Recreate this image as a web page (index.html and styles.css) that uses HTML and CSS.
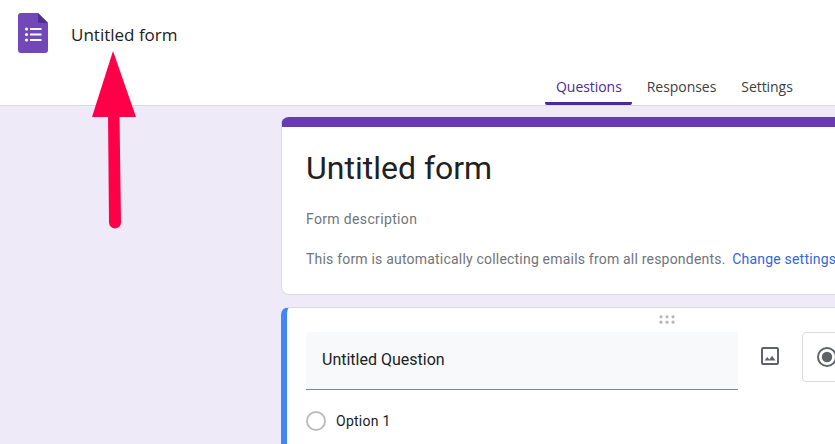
FILE: index.html
```html
<!DOCTYPE html>
<html lang="en">
<head>
<meta charset="utf-8">
<title>Untitled form</title>
<link rel="stylesheet" href="styles.css">
</head>
<body>
<div class="page">
  <header class="topbar">
    <div class="brand">
      <svg class="logo" width="30" height="40" viewBox="0 0 30 40">
        <path d="M3 0H20L30 10V37a3 3 0 0 1-3 3H3a3 3 0 0 1-3-3V3a3 3 0 0 1 3-3z" fill="#7248b9"/>
        <path d="M20 0L30 10H22a2 2 0 0 1-2-2z" fill="#4f2e91"/>
        <g fill="#fff">
          <circle cx="8.500" cy="16" r="1.600"/><circle cx="8.500" cy="21.500" r="1.600"/><circle cx="8.500" cy="27" r="1.600"/>
          <rect x="12" y="15" width="11.500" height="2"/><rect x="12" y="20.500" width="11.500" height="2"/><rect x="12" y="26" width="11.500" height="2"/>
        </g>
      </svg>
      <span class="doc-title">Untitled form</span>
    </div>
    <nav class="tabs">
      <a class="tab tab-active">Questions</a>
      <a class="tab">Responses</a>
      <a class="tab">Settings</a>
    </nav>
  </header>
  <main class="content">
    <section class="card title-card">
      <h1 class="form-title">Untitled form</h1>
      <p class="form-desc">Form description</p>
      <p class="form-note">This form is automatically collecting emails from all respondents. <a class="link">Change settings</a></p>
    </section>
    <section class="card question-card">
      <div class="drag">
        <svg width="16" height="9" viewBox="0 0 16 9" fill="#b5b7bb">
          <circle cx="2" cy="1.800" r="1.600"/><circle cx="8" cy="1.800" r="1.600"/><circle cx="14" cy="1.800" r="1.600"/>
          <circle cx="2" cy="7.200" r="1.600"/><circle cx="8" cy="7.200" r="1.600"/><circle cx="14" cy="7.200" r="1.600"/>
        </svg>
      </div>
      <div class="q-row">
        <div class="q-input">Untitled Question</div>
        <svg class="img-icon" width="24" height="24" viewBox="0 0 24 24" fill="#5f6368">
          <path d="M19 5v14H5V5h14m0-2H5a2 2 0 0 0-2 2v14a2 2 0 0 0 2 2h14a2 2 0 0 0 2-2V5a2 2 0 0 0-2-2z"/>
          <path d="M14.100 11.800l-2.800 3.600-2-2.400L6.500 16.600h11z"/>
        </svg>
        <div class="type-select">
          <svg width="24" height="24" viewBox="0 0 24 24" fill="#5f6368">
            <path d="M12 2a10 10 0 1 0 0 20 10 10 0 0 0 0-20zm0 18a8 8 0 1 1 0-16 8 8 0 0 1 0 16z"/>
            <circle cx="12" cy="12" r="5.200"/>
          </svg>
        </div>
      </div>
      <div class="option">
        <span class="radio"></span>
        <span class="option-label">Option 1</span>
      </div>
    </section>
  </main>
  <svg class="arrow" width="44" height="178" viewBox="0 0 44 178">
    <path d="M21 0L44 66H0z" fill="#ff0048"/>
    <path d="M16 65H27.500L29 171.500a6 6 0 0 1-12 0z" fill="#ff0048"/>
  </svg>
</div>
</body>
</html>
```
FILE: styles.css
```css
* { box-sizing: border-box; }
html, body { margin: 0; padding: 0; height: 100%; }
body { font-family: Roboto, "Liberation Sans", sans-serif; color: #202124; background: #eeeaf8; }
.page { position: relative; width: 835px; height: 444px; overflow: hidden; }
.topbar { height: 106px; background: #fff; border-bottom: 1px solid #dadce0; display: flex; flex-direction: column; justify-content: space-between; }
.brand { display: flex; align-items: center; padding: 13px 0 0 18px; }
.logo { flex: none; }
.doc-title { margin-left: 23px; font-family: "Open Sans", Roboto, sans-serif; font-size: 17px; line-height: 24px; color: #202124; margin-top: 3px; }
.tabs { display: flex; padding-left: 545px; }
.tab { height: 37px; padding: 9px 10px 0 11px; font-family: "Open Sans", Roboto, sans-serif; font-size: 14px; line-height: 20px; font-weight: 500; color: #3c4043; letter-spacing: -0.05px; margin-right: 4px; white-space: nowrap; }
.tab-active { color: #4f2a96; border-bottom: 3px solid #4f2a96; border-radius: 0 0 2px 2px; }
.content { display: flex; flex-direction: column; gap: 12px; padding: 11px 0 0 281px; }
.card { width: 770px; background: #fff; border-radius: 8px; border: 1px solid #dadce0; flex: none; }
.title-card { height: 178px; border-top: 10px solid #673ab7; padding: 0 24px; }
.form-title { margin: 21px 0 0; font-size: 32px; line-height: 40px; font-weight: 400; color: #202124; }
.form-desc { margin: 21px 0 0; font-size: 14px; line-height: 20px; color: #70757a; letter-spacing: 0.35px; }
.form-note { margin: 20px 0 0; font-size: 14px; line-height: 20px; color: #70757a; white-space: nowrap; letter-spacing: 0.2px; }
.link { color: #3367d6; margin-left: 3px; }
.question-card { height: 200px; border-left: 6px solid #4285f4; padding: 0 0 0 19px; }
.drag { height: 24px; padding: 7px 0 0 353px; display: flex; align-items: flex-start; }
.q-row { display: flex; align-items: flex-start; }
.q-input { width: 432px; height: 58px; background: #f8f9fa; border-bottom: 1px solid #80868b; padding: 0 16px; font-size: 16px; line-height: 55px; color: #202124; }
.img-icon { flex: none; margin: 12px 0 0 20px; }
.type-select { width: 200px; height: 50px; margin-left: 20px; border: 1px solid #dadce0; border-radius: 4px; padding: 12px 0 0 12px; flex: none; }
.option { display: flex; align-items: center; margin-top: 21px; }
.radio { width: 20px; height: 20px; border: 2px solid #bdbdbd; border-radius: 50%; flex: none; }
.option-label { margin-left: 10px; font-size: 14px; line-height: 20px; color: #202124; letter-spacing: 0.25px; }
.arrow { position: absolute; left: 92px; top: 51px; }
```
